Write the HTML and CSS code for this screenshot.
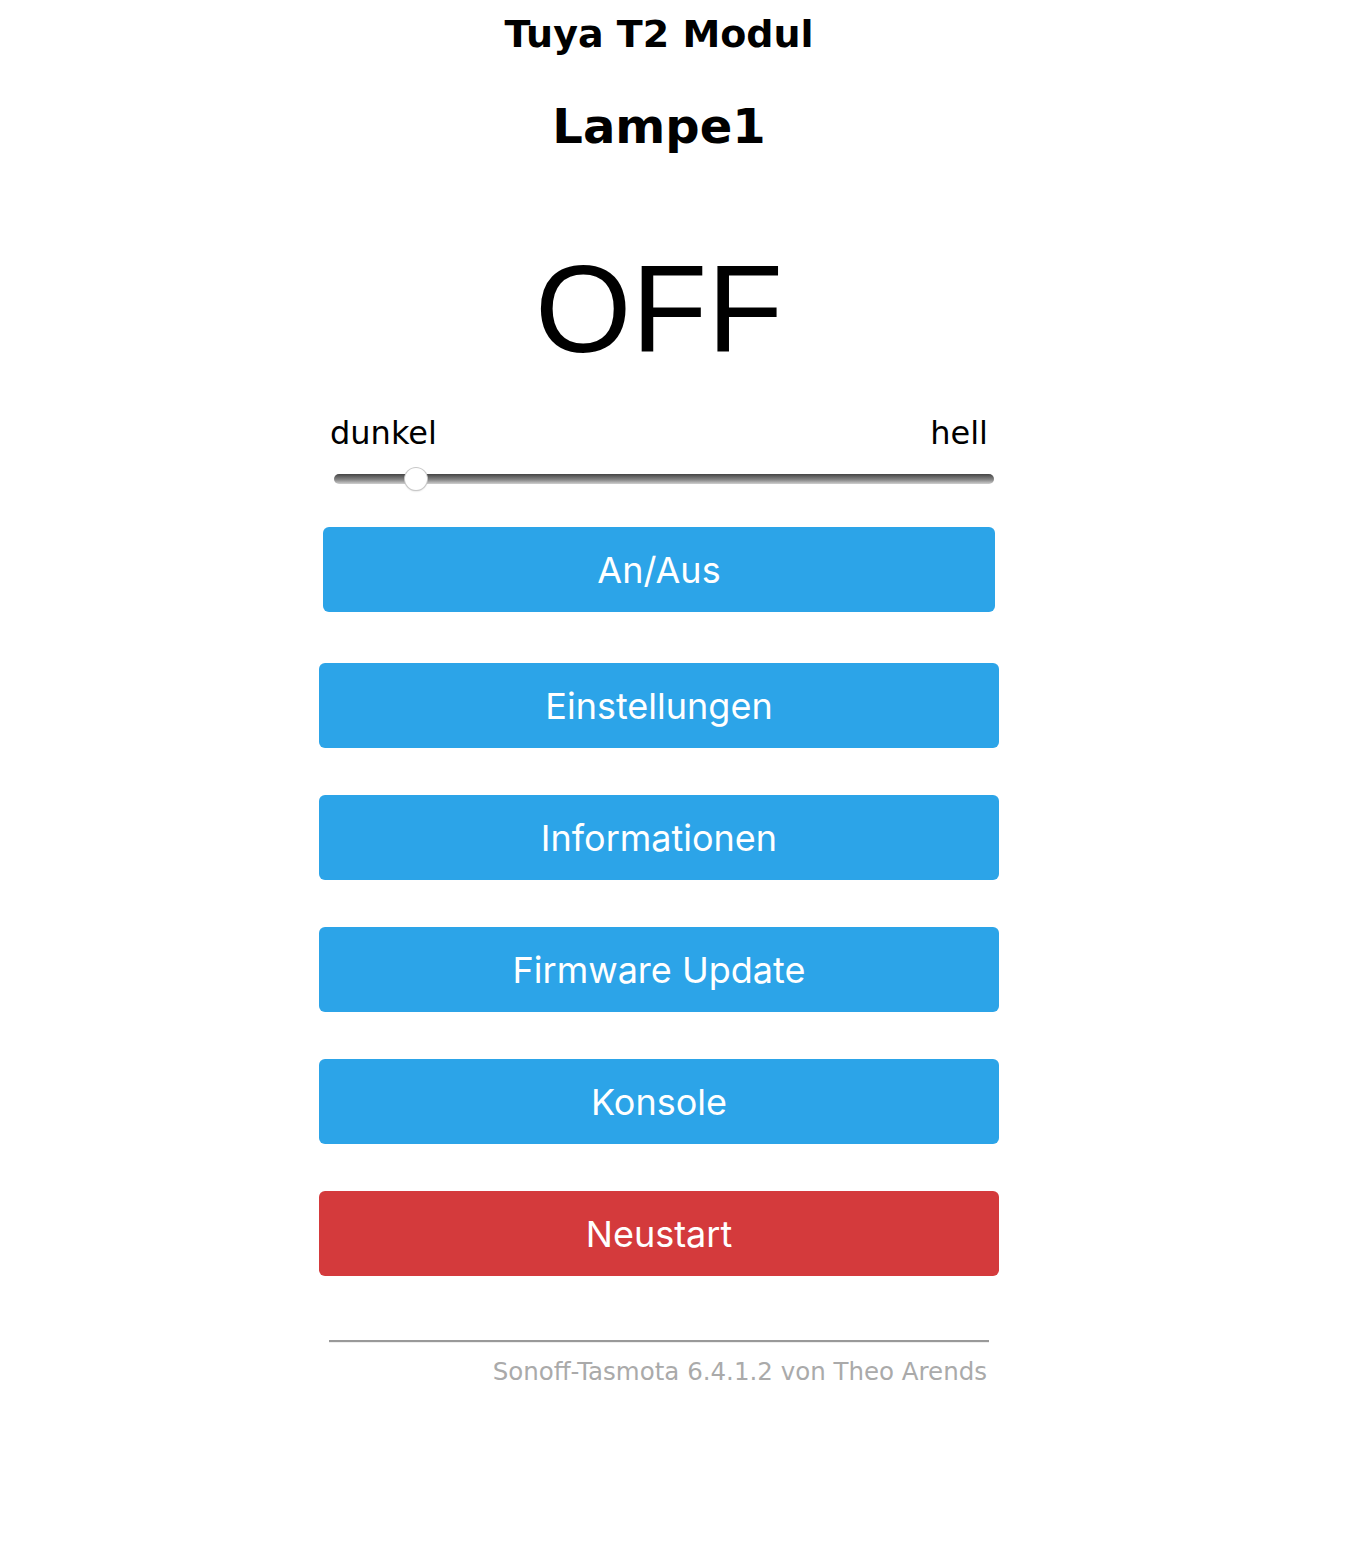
FILE: index.html
```html
<!DOCTYPE html>
<html lang="de">
<head>
    <meta charset="UTF-8">
    <meta name="viewport" content="width=device-width, initial-scale=1.0">
    <title>Lampe1 - Tasmota</title>
    <link rel="stylesheet" href="styles.css">
</head>
<body>
    <div id="main">
        <h3 class="module">Tuya T2 Modul</h3>
        <h2 class="device">Lampe1</h2>

        <div id="state">OFF</div>

        <div class="dimmer">
            <div class="labels">
                <span>dunkel</span>
                <span>hell</span>
            </div>
            <input type="range" class="slider" min="1" max="100" value="12">
        </div>

        <form class="toggle" action="." method="get">
            <button type="button" class="btn">An/Aus</button>
        </form>

        <form class="menu" action="." method="get">
            <button type="button" class="btn">Einstellungen</button>
            <button type="button" class="btn">Informationen</button>
            <button type="button" class="btn">Firmware Update</button>
            <button type="button" class="btn">Konsole</button>
            <button type="button" class="btn bred">Neustart</button>
        </form>

        <div class="footer">
            <hr>
            <div class="credits">Sonoff-Tasmota 6.4.1.2 von Theo Arends</div>
        </div>
    </div>
</body>
</html>
```

FILE: styles.css
```css
body {
    margin: 0;
    background: #fff;
    color: #000;
    font-family: "DejaVu Sans", Verdana, sans-serif;
}
#main {
    width: 680px;
    margin-left: 319px;
    text-align: center;
}
h3.module {
    margin: 12px 0 0;
    font-size: 38px;
    line-height: 44px;
    font-weight: 700;
}
h2.device {
    margin: 42px 0 0;
    font-size: 48px;
    line-height: 56px;
    font-weight: 700;
}
#state {
    margin-top: 90px;
    font-family: "Liberation Sans", Arial, sans-serif;
    font-size: 124px;
    line-height: 130px;
}
.dimmer {
    margin-top: 41px;
}
.labels {
    display: flex;
    justify-content: space-between;
    padding: 0 11px;
    font-size: 32px;
    line-height: 36px;
}
input.slider {
    -webkit-appearance: none;
    appearance: none;
    display: block;
    width: 660px;
    height: 24px;
    margin: 16px 0 0 15px;
    padding: 0;
    background: transparent;
}
input.slider::-webkit-slider-runnable-track {
    height: 10px;
    border-radius: 5px;
    background: linear-gradient(#444, #8a8a8a 60%, #d0d0d0);
}
input.slider::-webkit-slider-thumb {
    -webkit-appearance: none;
    width: 22px;
    height: 22px;
    margin-top: -6px;
    border-radius: 50%;
    background: #fff;
    box-shadow: 0 0 0 1px #c8c8c8, 0 1px 2px rgba(0,0,0,0.25);
}
form.toggle {
    margin: 36px 4px 0;
}
form.menu {
    display: flex;
    flex-direction: column;
    gap: 47px;
    margin-top: 51px;
}
.btn {
    display: block;
    width: 100%;
    height: 85px;
    border: 0;
    border-radius: 6px;
    background: #2ca4e8;
    color: #fff;
    font-family: Inter, "Liberation Sans", sans-serif;
    font-size: 36px;
    cursor: pointer;
}
.bred {
    background: #d43a3c;
}
.footer {
    margin-top: 64px;
    padding: 0 10px;
    text-align: right;
}
.footer hr {
    margin: 0;
    border: 0;
    border-top: 2px solid #999;
    border-bottom: 1px solid #eee;
}
.credits {
    margin-top: 15px;
    padding-right: 2px;
    color: #aaa;
    font-size: 24.5px;
    line-height: 28px;
}
```
